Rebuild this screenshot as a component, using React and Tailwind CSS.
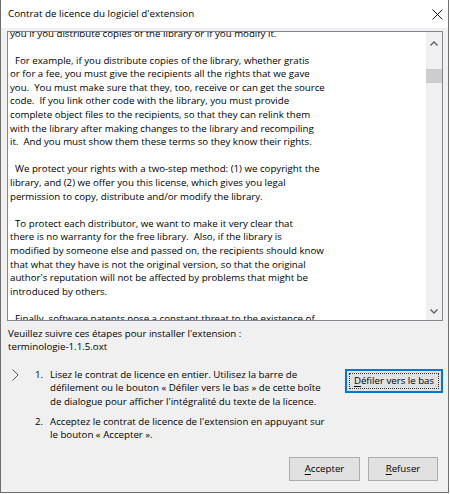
import React from 'react';

const licenseLines = [
    'you if you distribute copies of the library or if you modify it.',
    '',
    '  For example, if you distribute copies of the library, whether gratis',
    'or for a fee, you must give the recipients all the rights that we gave',
    'you.  You must make sure that they, too, receive or can get the source',
    'code.  If you link other code with the library, you must provide',
    'complete object files to the recipients, so that they can relink them',
    'with the library after making changes to the library and recompiling',
    'it.  And you must show them these terms so they know their rights.',
    '',
    '  We protect your rights with a two-step method: (1) we copyright the',
    'library, and (2) we offer you this license, which gives you legal',
    'permission to copy, distribute and/or modify the library.',
    '',
    '  To protect each distributor, we want to make it very clear that',
    'there is no warranty for the free library.  Also, if the library is',
    'modified by someone else and passed on, the recipients should know',
    'that what they have is not the original version, so that the original',
    "author's reputation will not be affected by problems that might be",
    'introduced by others.',
    '',
    '  Finally, software patents pose a constant threat to the existence of',
];

const steps = [
    [
        'Lisez le contrat de licence en entier. Utilisez la barre de',
        'défilement ou le bouton « Défiler vers le bas » de cette boîte',
        "de dialogue pour afficher l'intégralité du texte de la licence.",
    ],
    [
        "Acceptez le contrat de licence de l'extension en appuyant sur",
        'le bouton « Accepter ».',
    ],
];

const Chevron = ({ up }) => (
    <svg width="8" height="5" viewBox="0 0 8 5">
        <polyline
            points={up ? '0.5,4.5 4,1 7.5,4.5' : '0.5,0.5 4,4 7.5,0.5'}
            fill="none"
            stroke="#606060"
            strokeWidth="1.4"
        />
    </svg>
);

const Button = ({ accessKey, rest, width }) => (
    <button className={`h-[24px] ${width} bg-[#e1e1e1] border border-[#adadad] text-black`}>
        <span className="underline underline-offset-2">{accessKey}</span>
        {rest}
    </button>
);

export default function App() {
    return (
        <div className="w-[450px] h-[494px] bg-white font-['Open_Sans',sans-serif] text-[9.7px] leading-[13.4px] text-black">
            <div className="w-[449px] h-[493px] flex flex-col bg-[#f0f0f0] border-l border-r border-b border-[#6f6f6f]">
                {/* Title bar */}
                <div className="h-[28px] bg-white flex items-center justify-between pl-[7px] pr-[5px]">
                    <span className="text-[9.8px]">Contrat de licence du logiciel d'extension</span>
                    <svg width="11" height="11" viewBox="0 0 11 11">
                        <path d="M0.5 0.5 L10.5 10.5 M10.5 0.5 L0.5 10.5" stroke="#1a1a1a" strokeWidth="1" />
                    </svg>
                </div>

                <div className="flex-1 flex flex-col pl-[6px] pr-[5px] pt-[3px]">
                    {/* License text box */}
                    <div className="h-[290px] flex border border-[#828790] bg-white">
                        <div className="flex-1 overflow-hidden pl-[2px]">
                            <div className="mt-[-5.5px]">
                                {licenseLines.map((line, i) => (
                                    <div key={i} className="h-[13.6px] leading-[13.6px] whitespace-pre">{line}</div>
                                ))}
                            </div>
                        </div>
                        <div className="w-[16px] bg-[#f0f0f0] flex flex-col">
                            <div className="h-[20px] flex items-center justify-center pt-[3px]">
                                <Chevron up />
                            </div>
                            <div className="h-[17px]" />
                            <div className="h-[14px] bg-[#cdcdcd]" />
                            <div className="flex-1" />
                            <div className="h-[17px] flex items-center justify-center">
                                <Chevron />
                            </div>
                        </div>
                    </div>

                    <div className="mt-[6px] pl-[1px]">
                        <p>Veuillez suivre ces étapes pour installer l'extension :</p>
                        <p>terminologie-1.1.5.oxt</p>
                    </div>

                    {/* Steps */}
                    <div className="mt-[14px] flex items-start">
                        <div className="w-[28px] pl-[5px] pt-[1px]">
                            <svg width="7" height="12" viewBox="0 0 7 12">
                                <polyline points="0.5,0.5 6,6 0.5,11.5" fill="none" stroke="#555" strokeWidth="1" />
                            </svg>
                        </div>
                        <div className="flex-1 flex flex-col gap-[7px]">
                            {steps.map((lines, i) => (
                                <div key={i} className="flex">
                                    <span className="w-[15px] shrink-0">{i + 1}.</span>
                                    <div>
                                        {lines.map((l, j) => (
                                            <div key={j} className="whitespace-pre">{l}</div>
                                        ))}
                                    </div>
                                </div>
                            ))}
                        </div>
                        <button className="mt-[1px] w-[98px] h-[24px] p-[2px] bg-[#e1e1e1] border-2 border-[#0078d7]">
                            <div className="h-full flex items-center justify-center border border-dotted border-[#333]">
                                <span>
                                    <span className="underline underline-offset-2">D</span>éfiler vers le bas
                                </span>
                            </div>
                        </button>
                    </div>

                    <div className="flex-1" />

                    {/* Action buttons */}
                    <div className="flex justify-end gap-[8px] pr-[5px] pb-[11px]">
                        <Button accessKey="A" rest="ccepter" width="w-[71px]" />
                        <Button accessKey="R" rest="efuser" width="w-[70px]" />
                    </div>
                </div>
            </div>
        </div>
    );
}
